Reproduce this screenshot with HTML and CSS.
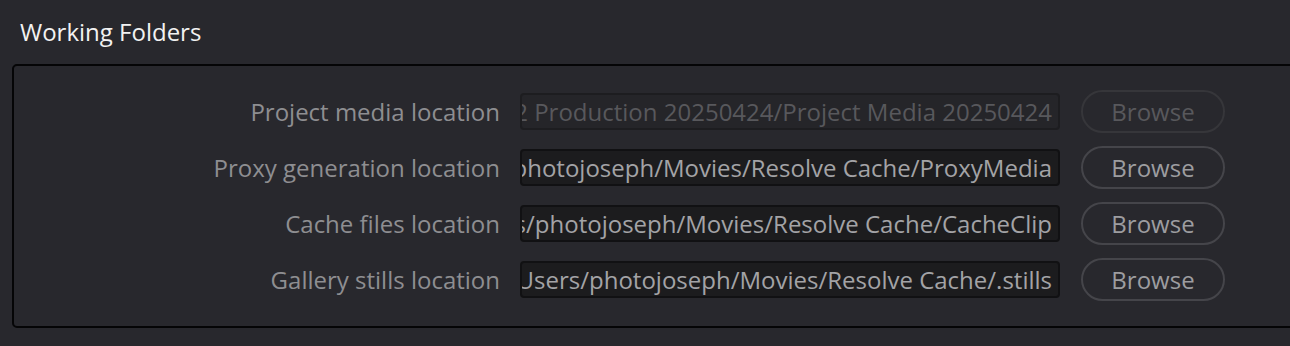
FILE: index.html
```html
<!DOCTYPE html>
<html lang="en">
<head>
    <meta charset="UTF-8">
    <title>Working Folders</title>
    <link rel="stylesheet" href="styles.css">
</head>
<body>
    <div class="section">
        <h2 class="section-title">Working Folders</h2>

        <div class="panel">
            <div class="row disabled">
                <label>Project media location</label>
                <div class="path"><span>/Volumes/Media/Season 2 Production 20250424/Project Media 20250424</span></div>
                <button>Browse</button>
            </div>
            <div class="row">
                <label>Proxy generation location</label>
                <div class="path"><span>/Users/photojoseph/Movies/Resolve Cache/ProxyMedia</span></div>
                <button>Browse</button>
            </div>
            <div class="row">
                <label>Cache files location</label>
                <div class="path"><span>/Users/photojoseph/Movies/Resolve Cache/CacheClip</span></div>
                <button>Browse</button>
            </div>
            <div class="row">
                <label>Gallery stills location</label>
                <div class="path"><span>/Users/photojoseph/Movies/Resolve Cache/.stills</span></div>
                <button>Browse</button>
            </div>
        </div>
    </div>
</body>
</html>
```

FILE: styles.css
```css
:root {
    --bg: #28282d;
    --label: #8e8e91;
    --field-bg: #1c1c1e;
    --field-border: #111113;
    --button-border: #45454a;
}

* {
    margin: 0;
    padding: 0;
    box-sizing: border-box;
    font-family: "Open Sans", sans-serif;
}

html, body {
    background-color: var(--bg);
    overflow: hidden;
}

.section {
    padding: 16px 0 0 12px;
}

.section-title {
    font-size: 24px;
    font-weight: 400;
    color: #f2f2f2;
    line-height: 32px;
    padding-left: 8px;
    margin-bottom: 16px;
}

.panel {
    width: 1300px;
    border: 2px solid #050506;
    border-radius: 5px;
    padding: 17px 0 19px;
}

.row {
    display: flex;
    align-items: center;
    height: 56px;
}

.row label {
    width: 486px;
    text-align: right;
    font-size: 24px;
    color: var(--label);
}

.path {
    width: 540px;
    height: 37px;
    margin-left: 20px;
    background: var(--field-bg);
    border: 2px solid var(--field-border);
    border-radius: 4px;
    display: flex;
    align-items: center;
    justify-content: flex-end;
    overflow: hidden;
    white-space: nowrap;
    padding-right: 6px;
}

.path span {
    font-size: 24px;
    color: #a3a3a6;
    flex-shrink: 0;
}

button {
    width: 144px;
    height: 43px;
    margin-left: 21px;
    background: transparent;
    border: 2px solid var(--button-border);
    border-radius: 22px;
    font-size: 24px;
    color: #9d9da0;
    font-family: "Open Sans", sans-serif;
}

.disabled .path {
    background: #252529;
    border-color: #1d1d20;
}

.disabled .path span,
.disabled button {
    color: #58585c;
}

.disabled button {
    border-color: #36363a;
}
```
